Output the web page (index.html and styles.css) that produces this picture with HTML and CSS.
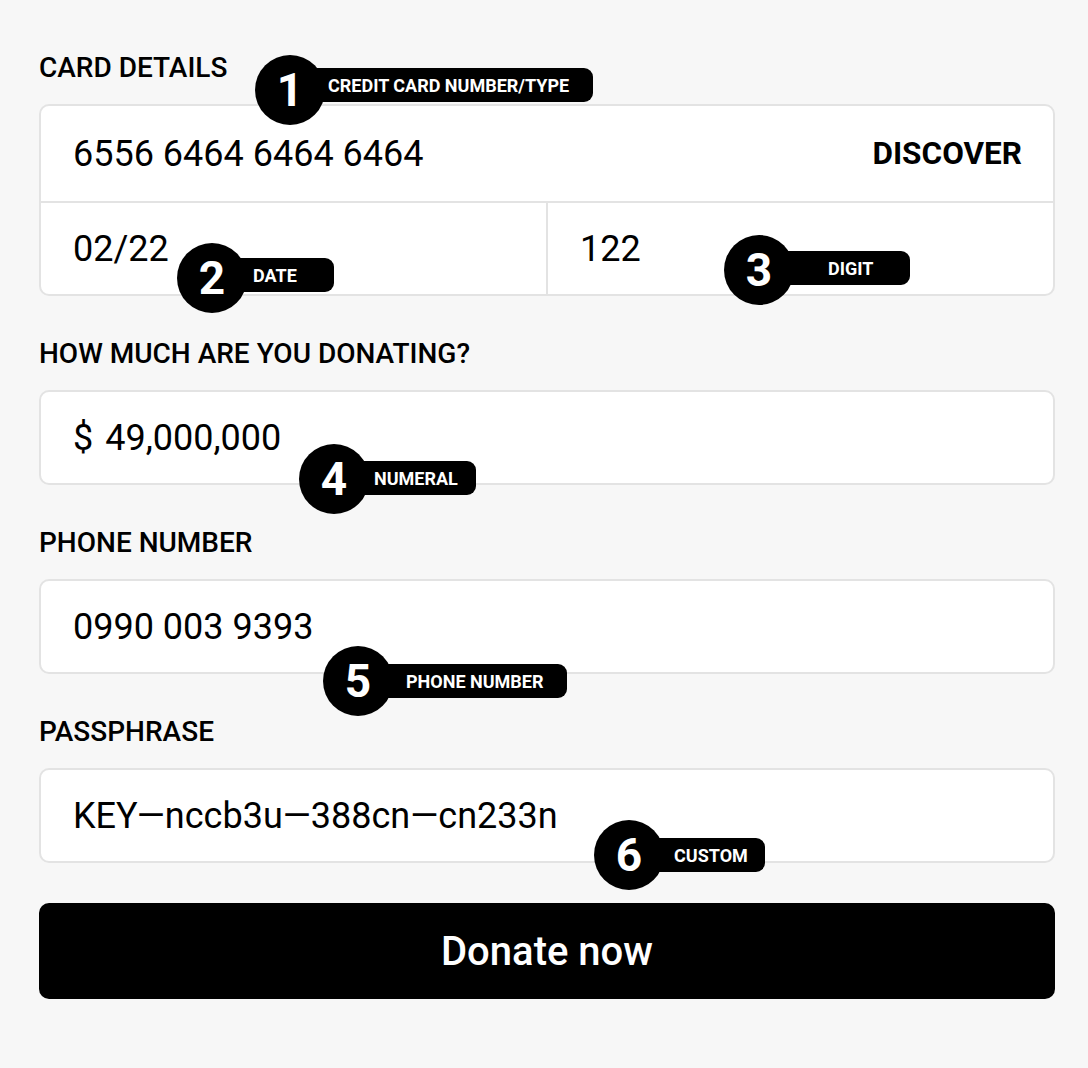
FILE: index.html
```html
<!DOCTYPE html>
<html lang="en">
<head>
<meta charset="utf-8">
<title>Donate</title>
<link rel="stylesheet" href="styles.css">
</head>
<body>
<main class="page">
  <section class="field">
    <div class="label">CARD DETAILS</div>
    <div class="box card">
      <div class="row row-top">
        <span class="value">6556 6464 6464 6464</span>
        <span class="brand">DISCOVER</span>
      </div>
      <div class="row-split">
        <div class="cell"><span class="value">02/22</span></div>
        <div class="cell cell-right"><span class="value">122</span></div>
      </div>
    </div>
  </section>

  <section class="field">
    <div class="label">HOW MUCH ARE YOU DONATING?</div>
    <div class="box single">
      <span class="value"><span class="currency">$</span>49,000,000</span>
    </div>
  </section>

  <section class="field">
    <div class="label">PHONE NUMBER</div>
    <div class="box single">
      <span class="value">0990 003 9393</span>
    </div>
  </section>

  <section class="field field-last">
    <div class="label">PASSPHRASE</div>
    <div class="box single">
      <span class="value">KEY—nccb3u—388cn—cn233n</span>
    </div>
  </section>

  <button class="donate" type="button">Donate now</button>

  <div class="badge b1"><span class="num">1</span><span class="pill">CREDIT CARD NUMBER/TYPE</span></div>
  <div class="badge b2"><span class="num">2</span><span class="pill">DATE</span></div>
  <div class="badge b3"><span class="num">3</span><span class="pill">DIGIT</span></div>
  <div class="badge b4"><span class="num">4</span><span class="pill">NUMERAL</span></div>
  <div class="badge b5"><span class="num">5</span><span class="pill">PHONE NUMBER</span></div>
  <div class="badge b6"><span class="num">6</span><span class="pill">CUSTOM</span></div>
</main>
</body>
</html>
```

FILE: styles.css
```css
* { box-sizing: border-box; }

html, body {
  margin: 0;
  background: #f7f7f7;
}

body {
  font-family: Roboto, "Liberation Sans", Arial, sans-serif;
  color: #000;
}

.page {
  position: relative;
  width: 1088px;
  min-height: 1068px;
  padding: 51px 33px 0 39px;
  display: flex;
  flex-direction: column;
}

.field {
  display: flex;
  flex-direction: column;
  margin-bottom: 41px;
}

.field-last {
  margin-bottom: 40px;
}

.label {
  font-size: 28px;
  font-weight: 500;
  line-height: 33px;
  height: 33px;
  margin-bottom: 20px;
}

.box {
  background: #fff;
  border: 2px solid #e3e3e3;
  border-radius: 10px;
}

.value {
  font-size: 36px;
  line-height: 40px;
  font-weight: 400;
}

.row {
  display: flex;
  align-items: center;
  justify-content: space-between;
  padding: 0 31px 0 32px;
}

.row-top {
  height: 97px;
  border-bottom: 2px solid #e3e3e3;
}

.brand {
  font-size: 31.5px;
  font-weight: 700;
  line-height: 36px;
}

.row-split {
  display: flex;
  height: 91px;
}

.cell {
  flex: 1;
  display: flex;
  align-items: center;
  padding-left: 32px;
}

.cell-right {
  border-left: 2px solid #e3e3e3;
}

.single {
  height: 95px;
  display: flex;
  align-items: center;
  padding-left: 32px;
}

.currency {
  margin-right: 12px;
}

.donate {
  width: 1016px;
  height: 96px;
  background: #000;
  color: #fff;
  border: none;
  border-radius: 10px;
  font-family: Roboto, "Liberation Sans", Arial, sans-serif;
  font-size: 40px;
  font-weight: 500;
  cursor: pointer;
}

/* annotation badges */
.badge {
  position: absolute;
  display: flex;
  align-items: flex-start;
}

.num {
  position: relative;
  z-index: 1;
  width: 70px;
  height: 70px;
  border-radius: 50%;
  background: #000;
  color: #fff;
  font-size: 46px;
  font-weight: 700;
  display: flex;
  align-items: center;
  justify-content: center;
  line-height: 1;
}

.pill {
  margin-top: 15px;
  margin-left: -35px;
  height: 34px;
  border-radius: 9px;
  background: #000;
  color: #fff;
  font-size: 18px;
  font-weight: 700;
  display: flex;
  align-items: center;
  white-space: nowrap;
}

.b1 { left: 255px; top: 55px; }
.b1 .pill { margin-top: 13px; padding: 0 24px 0 38px; }

.b2 { left: 177px; top: 243px; }
.b2 .pill { padding: 0 37px 0 41px; }

.b3 { left: 724px; top: 235px; }
.b3 .pill { margin-top: 16px; padding: 0 37px 0 69px; }

.b4 { left: 299px; top: 444px; }
.b4 .pill { margin-top: 17px; padding: 0 18px 0 40px; }

.b5 { left: 323px; top: 646px; }
.b5 .pill { margin-top: 18px; padding: 0 23px 0 48px; }

.b6 { left: 594px; top: 820px; }
.b6 .pill { margin-top: 18px; padding: 0 17px 0 45px; }
```
